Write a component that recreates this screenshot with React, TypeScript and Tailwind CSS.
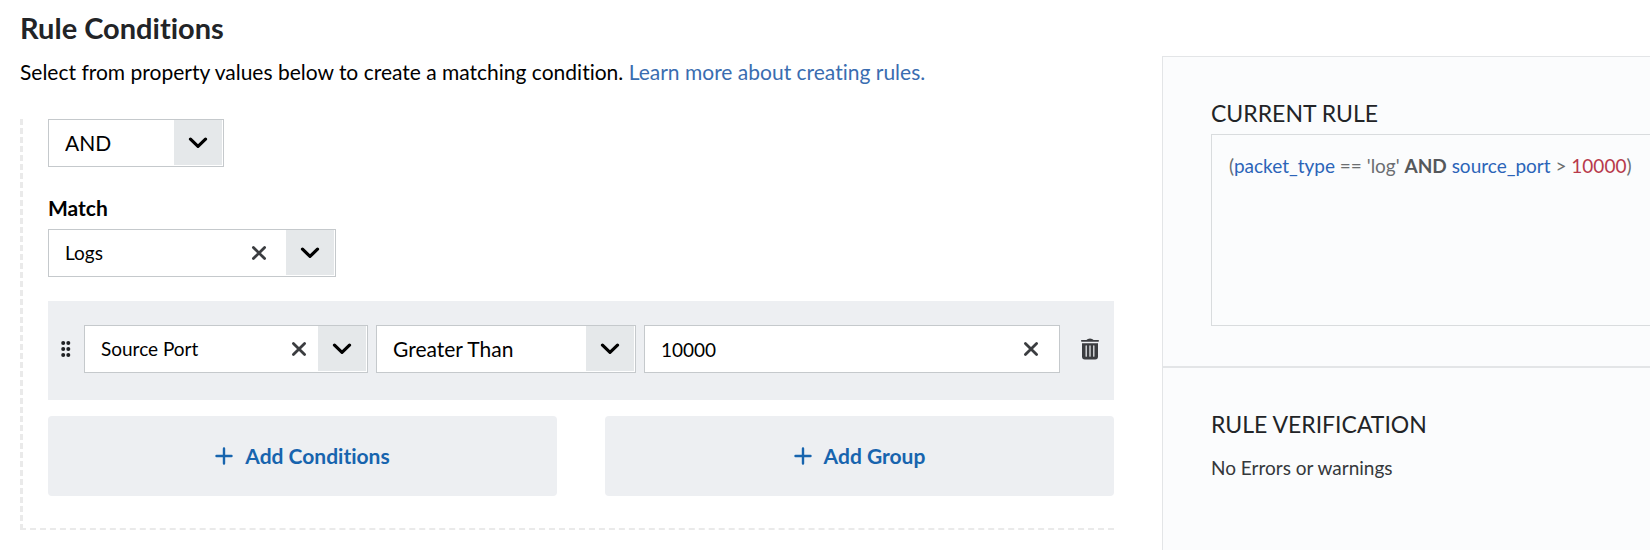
import { useState } from "react";

type SelectBoxProps = {
  label: string;
  options: string[];
  className: string;
  textClass?: string;
  clearable?: boolean;
  clearClass?: string;
}

const ChevronIcon = () => (
  <svg className="h-3 w-5" viewBox="0 0 20 12" fill="none" stroke="#000000" strokeWidth="3.2" strokeLinecap="round" strokeLinejoin="round">
    <path d="M2.5 2.2L10 9.4L17.5 2.2" />
  </svg>
);

const ClearIcon = () => (
  <svg className="h-4 w-4" viewBox="0 0 16 16" fill="none" stroke="#3b3d40" strokeWidth="2.8" strokeLinecap="round">
    <path d="M2.4 2.4L13.6 13.6M13.6 2.4L2.4 13.6" />
  </svg>
);

const PlusIcon = () => (
  <svg className="h-[18px] w-[18px]" viewBox="0 0 18 18" fill="none" stroke="#1764ae" strokeWidth="2.4" strokeLinecap="round">
    <path d="M9 1.5V16.5M1.5 9H16.5" />
  </svg>
);

const DragIcon = () => (
  <svg className="h-4 w-[10px]" viewBox="0 0 10 16" fill="#1f2124">
    <circle cx="2.2" cy="2" r="2" />
    <circle cx="7.3" cy="2" r="2" />
    <circle cx="2.2" cy="8" r="2" />
    <circle cx="7.3" cy="8" r="2" />
    <circle cx="2.2" cy="14" r="2" />
    <circle cx="7.3" cy="14" r="2" />
  </svg>
);

const TrashIcon = () => (
  <svg className="h-[22px] w-[18px]" viewBox="0 0 18 22">
    <path fill="#3b3d40" d="M0.8 1.9H5.4Q6.6 0.4 9 0.4T12.6 1.9H17.2Q18 1.9 18 2.8T17.2 3.8H0.8Q0 3.8 0 2.8T0.8 1.9Z" />
    <path fill="#3b3d40" d="M1 5.2H17V18.6Q17 21.6 14.2 21.6H3.8Q1 21.6 1 18.6Z" />
    <path stroke="#e4e6e9" strokeWidth="1.3" strokeLinecap="round" d="M5.2 8V18.2M9 8V18.2M12.8 8V18.2" />
  </svg>
);

const SelectBox = ({ label, options, className, textClass = "text-[21px]", clearable = false, clearClass = "right-[69px]" }: SelectBoxProps) => {
  const [value, setValue] = useState<string>(options[0]);

  return (
    <div className={`relative ${className}`}>
      <select
        aria-label={label}
        value={value}
        onChange={(e) => setValue(e.target.value)}
        className={`h-12 w-full appearance-none border border-[#c5c9cc] bg-white pl-4 pr-14 text-black ${textClass}`}
      >
        {options.map((option) => (
          <option key={option} value={option}>{option}</option>
        ))}
        {clearable && <option value=""></option>}
      </select>
      {clearable && (
        <button type="button" aria-label={`Clear ${label}`} className={`absolute top-4 cursor-pointer ${clearClass}`} onClick={() => setValue("")}>
          <ClearIcon />
        </button>
      )}
      <span className="pointer-events-none absolute bottom-[2px] right-[2px] top-px flex w-12 items-center justify-center bg-[#e5e8ea]">
        <ChevronIcon />
      </span>
    </div>
  );
};

const App = () => {
  const [port, setPort] = useState<string>("10000");

  return (
    <div className="flex min-h-screen gap-12 overflow-x-hidden bg-white font-['Lato',sans-serif] [font-variant-ligatures:none]">
      <main className="min-w-0 flex-1 pl-5">
        {/* Header */}
        <h1 className="pt-2 text-[29px] font-bold leading-10 text-[#222427]">Rule Conditions</h1>
        <p className="mt-2 text-[21px] leading-8 text-black">
          Select from property values below to create a matching condition.{" "}
          <a href="#rules" className="text-[#3a6db0]">Learn more about creating rules.</a>
        </p>

        {/* Condition group */}
        <section className="mt-[31px] border-b-2 border-l-[3px] border-dashed border-[#eaeaea] pb-8 pl-[25px]">
          <SelectBox label="Operator" options={["AND", "OR"]} className="w-44" />

          <h2 className="mt-[25px] text-[21px] font-bold leading-8 text-black">Match</h2>
          <SelectBox label="Match" options={["Logs", "Metrics"]} className="mt-[5px] w-72" textClass="text-[19px]" clearable />

          <div className="mt-6 flex items-center bg-[#edeff2] pb-[27px] pl-[13px] pr-[15px] pt-6">
            <button type="button" aria-label="Move condition" className="mr-[13px] cursor-grab">
              <DragIcon />
            </button>
            <SelectBox label="Property" options={["Source Port", "Destination Port"]} className="mr-2 w-[284px]" textClass="text-[19px]" clearable clearClass="right-[61px]" />
            <SelectBox label="Comparison" options={["Greater Than", "Less Than"]} className="mr-2 w-[260px]" />
            <div className="relative flex-1">
              <input
                type="text"
                aria-label="Value"
                value={port}
                onChange={(e) => setPort(e.target.value)}
                className="h-12 w-full border border-[#c5c9cc] bg-white pl-4 pr-12 text-[19px] text-black"
              />
              <button type="button" aria-label="Clear value" className="absolute right-[21px] top-4 cursor-pointer" onClick={() => setPort("")}>
                <ClearIcon />
              </button>
            </div>
            <button type="button" aria-label="Delete condition" className="ml-[21px] cursor-pointer">
              <TrashIcon />
            </button>
          </div>

          <div className="mt-4 grid grid-cols-2 gap-12">
            <button type="button" className="flex h-20 cursor-pointer items-center justify-center gap-3 rounded bg-[#edeff2] text-[21px] font-bold text-[#1764ae]">
              <PlusIcon />
              Add Conditions
            </button>
            <button type="button" className="flex h-20 cursor-pointer items-center justify-center gap-3 rounded bg-[#edeff2] text-[21px] font-bold text-[#1764ae]">
              <PlusIcon />
              Add Group
            </button>
          </div>
        </section>
      </main>

      {/* Rule preview */}
      <aside className="mt-14 w-[488px] shrink-0 border-l border-t border-[#e3e5e7] bg-[#fbfcfd]">
        <div className="border-b-2 border-[#e3e5e7] pb-10 pl-12 pt-10">
          <h2 className="text-[23px] leading-8 text-[#222427]">CURRENT RULE</h2>
          <div className="mt-[5px] h-48 border-y border-l border-[#d9dcde] py-[15px] pl-[17px]">
            <code className="whitespace-nowrap font-['Lato',sans-serif] text-[19px] leading-8 text-[#6b6e71]">
              (<span className="text-[#2b64b8]">packet_type</span> == 'log' <b className="text-[#55585b]">AND</b>{" "}
              <span className="text-[#2b64b8]">source_port</span> &gt; <span className="text-[#b83a4b]">10000</span>)
            </code>
          </div>
        </div>
        <div className="pl-12 pt-10">
          <h2 className="text-[23px] leading-8 text-[#222427]">RULE VERIFICATION</h2>
          <p className="mt-3 text-[19px] leading-8 text-[#35383b]">No Errors or warnings</p>
        </div>
      </aside>
    </div>
  );
}

export default App;
